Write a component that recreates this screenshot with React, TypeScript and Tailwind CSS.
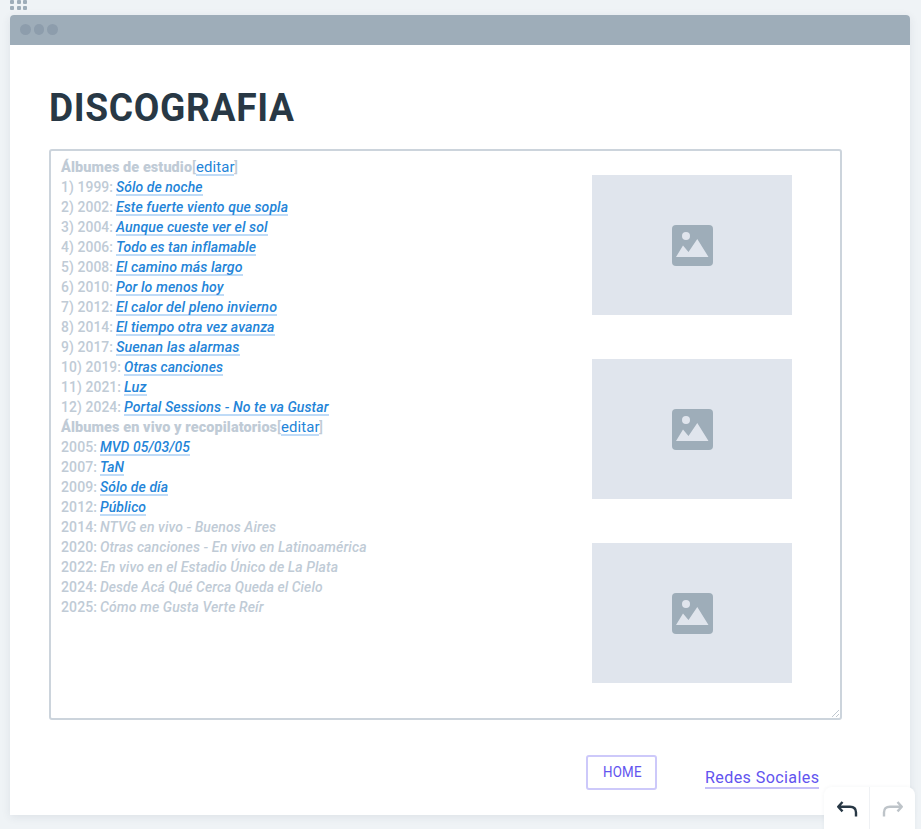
import { useLayoutEffect, useRef } from "react";

type FitProps = { text: string; width: number; className?: string; underline?: string };

// Squeezes a run of text horizontally so that it fills the given width.
function Fit({ text, width, className = "", underline = "" }: FitProps) {
  const inner = useRef<HTMLSpanElement>(null);
  useLayoutEffect(() => {
    const el = inner.current;
    if (!el) return;
    const spacing = parseFloat(getComputedStyle(el).letterSpacing) || 0;
    el.style.transform = "none";
    el.style.transform = `scaleX(${width / (el.getBoundingClientRect().width - spacing)})`;
  }, [width]);
  return (
    <span className={`inline-block shrink-0 ${underline}`} style={{ width }}>
      <span ref={inner} className={`inline-block origin-left whitespace-pre ${className}`}>
        {text}
      </span>
    </span>
  );
}

const LINK_LINE = "h-[18px] border-b-2 border-[#bfdbf7]";

type Album = { label: string; labelWidth: number; title: string; width: number; link?: boolean };

const studio: Album[] = [
  { label: "1) 1999:", labelWidth: 52, title: "Sólo de noche", width: 86.5, link: true },
  { label: "2) 2002:", labelWidth: 52, title: "Este fuerte viento que sopla", width: 172, link: true },
  { label: "3) 2004:", labelWidth: 52, title: "Aunque cueste ver el sol", width: 151.5, link: true },
  { label: "4) 2006:", labelWidth: 52, title: "Todo es tan inflamable", width: 140, link: true },
  { label: "5) 2008:", labelWidth: 52, title: "El camino más largo", width: 126.5, link: true },
  { label: "6) 2010:", labelWidth: 52, title: "Por lo menos hoy", width: 107.5, link: true },
  { label: "7) 2012:", labelWidth: 52, title: "El calor del pleno invierno", width: 161, link: true },
  { label: "8) 2014:", labelWidth: 52, title: "El tiempo otra vez avanza", width: 158.5, link: true },
  { label: "9) 2017:", labelWidth: 52, title: "Suenan las alarmas", width: 123.5, link: true },
  { label: "10) 2019:", labelWidth: 60, title: "Otras canciones", width: 99, link: true },
  { label: "11) 2021:", labelWidth: 60, title: "Luz", width: 22.5, link: true },
  { label: "12) 2024:", labelWidth: 60, title: "Portal Sessions - No te va Gustar", width: 204.5, link: true },
];

const live: Album[] = [
  { label: "2005:", labelWidth: 36, title: "MVD 05/03/05", width: 90, link: true },
  { label: "2007:", labelWidth: 36, title: "TaN", width: 24, link: true },
  { label: "2009:", labelWidth: 36, title: "Sólo de día", width: 68, link: true },
  { label: "2012:", labelWidth: 36, title: "Público", width: 46, link: true },
  { label: "2014:", labelWidth: 36, title: "NTVG en vivo - Buenos Aires", width: 176 },
  { label: "2020:", labelWidth: 36, title: "Otras canciones - En vivo en Latinoamérica", width: 266.5 },
  { label: "2022:", labelWidth: 36, title: "En vivo en el Estadio Único de La Plata", width: 238 },
  { label: "2024:", labelWidth: 36, title: "Desde Acá Qué Cerca Queda el Cielo", width: 222.5 },
  { label: "2025:", labelWidth: 36, title: "Cómo me Gusta Verte Reír", width: 163.5 },
];

function Heading({ text, width }: { text: string; width: number }) {
  return (
    <div className="flex h-5">
      <Fit text={text} width={width} className="font-black" />
      <Fit text="[" width={4} />
      <Fit text="editar" width={38.5} className="font-normal text-[#2384d8]" underline={LINK_LINE} />
      <Fit text="]" width={4} />
    </div>
  );
}

function Row({ album }: { album: Album }) {
  return (
    <div className="flex h-5 gap-[3.5px]">
      <Fit text={album.label} width={album.labelWidth} />
      <Fit
        text={album.title}
        width={album.width}
        className={album.link ? "italic text-[#2384d8]" : "italic"}
        underline={album.link ? LINK_LINE : ""}
      />
    </div>
  );
}

function ImagePlaceholder() {
  return (
    <div className="flex h-[140px] w-[200px] items-center justify-center bg-[#e0e5ed] pl-px pt-px">
      <svg width="41" height="41" viewBox="0 0 41 41">
        <rect width="41" height="41" rx="4" fill="#9eadb9" />
        <circle cx="14" cy="11" r="4" fill="#e0e5ed" />
        <path d="M4 32 L11 20.5 L16.5 27 L25.3 14 L36.5 32 Z" fill="#e0e5ed" />
      </svg>
    </div>
  );
}

export default function App() {
  return (
    <div className="relative h-[829px] w-[921px] overflow-hidden bg-[#eff3f6] font-['Roboto','Liberation_Sans',sans-serif]">
      <div className="ml-[10px] grid h-[14.5px] w-[17px] grid-cols-[4px_4px_4px] content-start justify-between gap-y-[2px]">
        {[0, 1, 2, 3, 4, 5].map((i) => (
          <span key={i} className="size-1 rounded-[1px] bg-[#9eadb9]" />
        ))}
      </div>

      <main className="ml-[10px] h-[800px] w-[900.4px] rounded-t bg-white shadow-[0_2px_10px_rgba(40,60,80,0.09)]">
        <div className="flex h-[30px] items-center gap-[3px] rounded-t bg-[#9eadb9] pl-[10px]">
          <span className="size-[10.5px] rounded-full bg-[#8d9dac]" />
          <span className="size-[10.5px] rounded-full bg-[#8d9dac]" />
          <span className="size-[10.5px] rounded-full bg-[#8d9dac]" />
        </div>

        <div className="pl-[38.5px] pt-[38px]">
          <h1 className="h-[66.9px] text-[39px] font-bold leading-[50px] text-[#283845]">
            <Fit text="DISCOGRAFIA" width={245} className="tracking-[0.7px]" />
          </h1>

          <div className="relative flex h-[571px] w-[793.2px] justify-between rounded-[3px] border-2 border-[#ccd4dc] pl-[10.1px] pr-[47.7px] pt-[6.6px]">
            <div className="text-[14.5px] font-medium leading-5 tracking-[0.1px] text-[#c0cbd6]">
              <Heading text="Álbumes de estudio" width={131} />
              {studio.map((a) => (
                <Row key={a.label} album={a} />
              ))}
              <Heading text="Álbumes en vivo y recopilatorios" width={216} />
              {live.map((a) => (
                <Row key={a.label} album={a} />
              ))}
            </div>
            <div className="flex flex-col gap-[44px] pt-[17px]">
              <ImagePlaceholder />
              <ImagePlaceholder />
              <ImagePlaceholder />
            </div>
            <svg className="absolute bottom-0 right-0" width="9" height="9" viewBox="0 0 9 9" stroke="#c0c8d0" strokeWidth="1">
              <path d="M1 8 L8 1 M5 8 L8 5" />
            </svg>
          </div>

          <div className="flex pl-[537.9px] pt-[35px] text-[#6254ef]">
            <button className="flex h-[34.5px] w-[71px] items-center justify-center rounded-[3px] border-2 border-[#cdc9fa] text-[15px]">
              <Fit text="HOME" width={38.5} className="tracking-[0.2px]" />
            </button>
            <a className="ml-[47.7px] mt-[10px] block text-[17px] leading-6">
              <Fit text="Redes Sociales" width={114} className="tracking-[0.4px]" underline="h-6 border-b-2 border-[#c4bff8]" />
            </a>
          </div>
        </div>
      </main>

      <div className="absolute left-[824px] top-[787px] flex h-[50px] w-[91px] rounded-lg bg-white shadow-[0_0_4px_rgba(40,60,80,0.05)]">
        <div className="flex w-[46px] justify-center border-r border-[#eff1f4] pt-[14px]">
          <svg width="22" height="18" viewBox="0 0 22 18" fill="none" stroke="#283845" strokeWidth="2.4" strokeLinejoin="round">
            <path d="M6.5 1 L2.2 5.7 L6.5 10.4 M2.2 5.7 H14 Q20 5.7 20 11.5 V15.5" />
          </svg>
        </div>
        <div className="flex w-[45px] justify-center pt-[14px]">
          <svg width="22" height="18" viewBox="0 0 22 18" fill="none" stroke="#bec4c9" strokeWidth="2.4" strokeLinejoin="round">
            <path d="M15.5 1 L19.8 5.7 L15.5 10.4 M19.8 5.7 H8 Q2 5.7 2 11.5 V15.5" />
          </svg>
        </div>
      </div>
    </div>
  );
}
